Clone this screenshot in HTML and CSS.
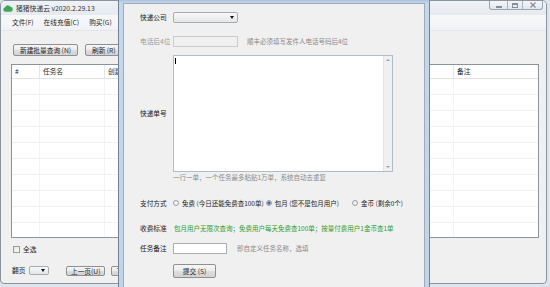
FILE: index.html
```html
<!DOCTYPE html>
<html lang="zh-CN">
<head>
<meta charset="utf-8">
<title>猪猪快递云</title>
<link rel="stylesheet" href="styles.css">
</head>
<body>
<div class="screen">
  <div class="win">
    <div class="titlebar">
      <svg class="logo" viewBox="0 0 20 14" aria-hidden="true">
        <path d="M5 13.5 A4.5 4.5 0 0 1 4.2 4.6 A5.5 5.5 0 0 1 14.6 3.6 A5 5 0 0 1 15.5 13.5 Z" fill="#3aa858"/>
      </svg>
      <span class="title">猪猪快递云 v2020.2.29.13</span>
      <div class="caps">
        <span class="cap cap-min"><i></i></span>
        <span class="cap cap-max"><i></i></span>
        <span class="cap cap-close">
          <svg viewBox="0 0 8 6" aria-hidden="true"><path d="M1.5 0.5 L6.5 5.5 M6.5 0.5 L1.5 5.5" stroke="#8a8f96" stroke-width="1.3" fill="none"/></svg>
        </span>
      </div>
    </div>
    <div class="menubar">
      <span>文件(F)</span>
      <span>在线充值(C)</span>
      <span>购买(G)</span>
    </div>
    <div class="toolbar">
      <button class="btn">新建批量查询 (N)</button>
      <button class="btn">刷新 (R)</button>
    </div>
    <div class="table">
      <div class="tr thead"><span>#</span><span>任务名</span><span>创建时间</span><span>快递公司</span><span>状态</span><span>备注</span></div>
      <div class="tr"><span></span><span></span><span></span><span></span><span></span><span></span></div>
      <div class="tr"><span></span><span></span><span></span><span></span><span></span><span></span></div>
      <div class="tr"><span></span><span></span><span></span><span></span><span></span><span></span></div>
      <div class="tr"><span></span><span></span><span></span><span></span><span></span><span></span></div>
      <div class="tr"><span></span><span></span><span></span><span></span><span></span><span></span></div>
      <div class="tr"><span></span><span></span><span></span><span></span><span></span><span></span></div>
      <div class="tr"><span></span><span></span><span></span><span></span><span></span><span></span></div>
      <div class="tr"><span></span><span></span><span></span><span></span><span></span><span></span></div>
      <div class="tr"><span></span><span></span><span></span><span></span><span></span><span></span></div>
      <div class="tr"><span></span><span></span><span></span><span></span><span></span><span></span></div>
    </div>
    <div class="selall"><span class="chk"></span><span>全选</span></div>
    <div class="pager">
      <span class="pager-lbl">翻页</span>
      <span class="combo small"><i class="arrow"></i></span>
      <button class="btn btn-sm prev">上一页(U)</button>
      <button class="btn btn-sm next">下一页(D)</button>
    </div>
  </div>

  <div class="dialog">
    <div class="dlg-body">
      <div class="row r1">
        <span class="lbl">快递公司</span>
        <span class="combo company"><i class="arrow"></i></span>
      </div>
      <div class="row r2">
        <span class="lbl dis">电话后4位</span>
        <span class="field phone"></span>
        <span class="hint phone-hint">顺丰必须填写发件人电话号码后4位</span>
      </div>
      <div class="row r3">
        <span class="lbl">快递单号</span>
        <div class="textarea">
          <div class="ta-text"><i class="caret"></i></div>
          <div class="vscroll"><i class="up"></i><i class="down"></i></div>
        </div>
      </div>
      <div class="row r4">
        <span class="lbl"></span>
        <span class="hint">一行一单，一个任务最多粘贴1万单，系统自动去重复</span>
      </div>
      <div class="row r5">
        <span class="lbl">支付方式</span>
        <span class="radio"><i class="rb"></i>免费 (今日还能免费查100单)</span>
        <span class="radio on rad2"><i class="rb"></i>包月 (您不是包月用户)</span>
        <span class="radio rad3"><i class="rb"></i>金币 (剩余0个)</span>
      </div>
      <div class="row r6">
        <span class="lbl">收费标准</span>
        <span class="green">包月用户无限次查询；免费用户每天免费查100单；按量付费用户1金币查1单</span>
      </div>
      <div class="row r7">
        <span class="lbl">任务备注</span>
        <span class="field note"></span>
        <span class="hint note-hint">即自定义任务名称，选填</span>
      </div>
      <div class="row r8">
        <span class="lbl"></span>
        <button class="btn submit">提交 (S)</button>
      </div>
    </div>
  </div>
</div>
</body>
</html>
```

FILE: styles.css
```css
* { box-sizing: border-box; margin: 0; padding: 0; }

html, body { width: 550px; height: 287px; overflow: hidden; }

body {
  background: #dde4ec;
  font-family: "Noto Sans CJK SC", "Noto Sans", sans-serif;
  font-size: 6.7px;
  line-height: 1;
  color: #1e1e1e;
}

.screen { position: relative; width: 550px; height: 287px; overflow: hidden; }

/* ---------- main window ---------- */
.win {
  width: 547px;
  height: 284px;
  border: 1px solid #8a94a0;
  border-radius: 5px 5px 4px 4px;
  background: #f0f0f0;
  display: flex;
  flex-direction: column;
  overflow: hidden;
}

.titlebar {
  height: 14px;
  display: flex;
  align-items: center;
  padding-left: 2px;
  background: linear-gradient(#eef1f5, #e6eaef);
}
.logo { width: 10px; height: 7px; margin-right: 3px; }
.title { font-size: 6.8px; color: #333; }

.caps {
  margin-left: auto;
  margin-right: 3px;
  align-self: flex-start;
  display: flex;
  height: 9px;
  border: 1px solid #9aa5b2;
  border-top: none;
  border-radius: 0 0 3px 3px;
  overflow: hidden;
  background: linear-gradient(#f4f6f9, #e2e7ed);
}
.cap { display: flex; align-items: center; justify-content: center; height: 100%; }
.cap + .cap { border-left: 1px solid #a9b3bf; }
.cap-min { width: 17px; }
.cap-min i { width: 6px; height: 2px; background: #8a8f96; margin-top: 3px; }
.cap-max { width: 15px; }
.cap-max i { width: 6px; height: 5px; border: 1px solid #8a8f96; border-top-width: 2px; }
.cap-close { width: 20px; }
.cap-close svg { width: 8px; height: 6px; }

.menubar {
  height: 16px;
  display: flex;
  align-items: center;
  gap: 10px;
  padding-left: 11px;
  background: linear-gradient(#f7f8fa, #f1f2f5);
  border-bottom: 1px solid #e4e6ea;
}

.toolbar { display: flex; gap: 7px; padding: 13px 0 0 12px; }

.btn {
  font: inherit;
  color: #1e1e1e;
  height: 12px;
  padding: 0 6px;
  border: 1px solid #8f8f8f;
  border-radius: 2px;
  background: linear-gradient(#f6f6f6 0%, #ececec 48%, #dedede 52%, #d2d2d2 100%);
  line-height: 10px;
  white-space: nowrap;
}

/* ---------- list view ---------- */
.table {
  margin: 8px 7px 0 10px;
  height: 174px;
  border: 1px solid #8b939d;
  background: #fff;
  overflow: hidden;
}
.tr {
  display: grid;
  grid-template-columns: 28px 65px 120px 120px 109px 1fr;
  height: 16px;
  border-bottom: 1px solid #f1f1f1;
}
.tr > span { border-right: 1px solid #f3f3f3; padding-left: 3px; line-height: 13px; white-space: nowrap; overflow: hidden; }
.thead { height: 14px; border-bottom: 1px solid #e3e3e3; }
.thead > span { border-right: 1px solid #e6e6e6; color: #1e1e1e; }
.thead > span:last-child, .tr > span:last-child { border-right: none; }

.selall { display: flex; align-items: center; gap: 3px; margin: 7px 0 0 12px; height: 8px; }
.chk {
  width: 7px; height: 7px;
  border: 1px solid #9a9a9a;
  background: linear-gradient(135deg, #e4e4e4, #fbfbfb);
}

.pager { display: flex; align-items: center; margin: 12px 0 0 11px; height: 11px; }
.pager-lbl { width: 17px; }
.combo {
  position: relative;
  display: block;
  height: 11px;
  border: 1px solid #a6acb3;
  border-radius: 2px;
  background: linear-gradient(#f8f8f8, #e6e6e6);
}
.combo .arrow {
  position: absolute;
  right: 3px; top: 3px;
  width: 0; height: 0;
  border-left: 2px solid transparent;
  border-right: 2px solid transparent;
  border-top: 3px solid #111;
}
.combo.small { width: 20px; height: 9px; }
.combo.small .arrow { top: 2px; }
.btn-sm { height: 10px; line-height: 8px; padding: 0 4px; }
.prev { margin-left: 17px; }
.next { margin-left: 6px; }

/* ---------- dialog ---------- */
.dialog {
  position: absolute;
  left: 118px;
  top: 0;
  width: 312px;
  height: 300px;
  border: 1px solid #6f8299;
  border-top: none;
  padding: 3px 4px 0 4px;
  background: linear-gradient(#aac3e0, #c7d7ea 3px, #c3d4e8);
}
.dlg-body {
  height: 100%;
  background: #f0f0f0;
  border: 1px solid #9eabba;
  padding: 8px 0 0 16px;
  display: flex;
  flex-direction: column;
}

.row { display: flex; align-items: center; }
.lbl { width: 33px; flex: none; white-space: nowrap; color: #1a1a1a; }
.lbl.dis { color: #9a9a9a; }
.hint { color: #8a8a8a; white-space: nowrap; font-size: 6.5px; }

.r1 { height: 11px; }
.r2 { height: 11px; margin-top: 13px; }
.r3 { height: 117px; margin-top: 8px; }
.r4 { height: 9px; margin-top: 1px; }
.r5 { height: 10px; margin-top: 16px; }
.r6 { height: 10px; margin-top: 15px; }
.r7 { height: 11px; margin-top: 10px; }
.r8 { height: 14px; margin-top: 10px; }

.company { width: 65px; }

.field { display: block; height: 11px; border: 1px solid #abadb3; background: #fff; }
.field.phone { width: 65px; background: #f0f0f0; border-color: #c9cbd0; }
.phone-hint { margin-left: 9px; }
.field.note { width: 54px; }
.note-hint { margin-left: 10px; }

.textarea {
  width: 220px;
  height: 117px;
  display: flex;
  border: 1px solid #b4bcc6;
  background: #fff;
}
.ta-text { flex: 1; padding: 2px 0 0 1px; }
.caret { display: block; width: 1px; height: 6px; background: #000; }
.vscroll {
  width: 9px;
  display: flex;
  flex-direction: column;
  justify-content: space-between;
  align-items: center;
  padding: 3px 0;
  background: #eef0f2;
  border-left: 1px solid #e3e5e8;
}
.vscroll i { width: 0; height: 0; border-left: 2px solid transparent; border-right: 2px solid transparent; }
.vscroll .up { border-bottom: 2px solid #9aa0a8; }
.vscroll .down { border-top: 2px solid #9aa0a8; }

.radio { display: flex; align-items: center; white-space: nowrap; font-size: 6.5px; }
.rb {
  width: 6px; height: 6px;
  margin-right: 3px;
  border-radius: 50%;
  border: 1px solid #9aa1aa;
  background: radial-gradient(circle, #fdfdfd, #e2e4e7);
}
.radio.on .rb { background: radial-gradient(circle, #4f6b8d 0 1.4px, #c9d4e2 1.8px, #eef1f5 100%); }
.rad2 { margin-left: 2px; }
.rad3 { margin-left: 13px; }

.green { color: #2f9d2f; white-space: nowrap; font-size: 6.5px; margin-left: 1px; }

.submit { width: 43px; height: 14px; line-height: 12px; padding: 0; text-align: center; }
```
